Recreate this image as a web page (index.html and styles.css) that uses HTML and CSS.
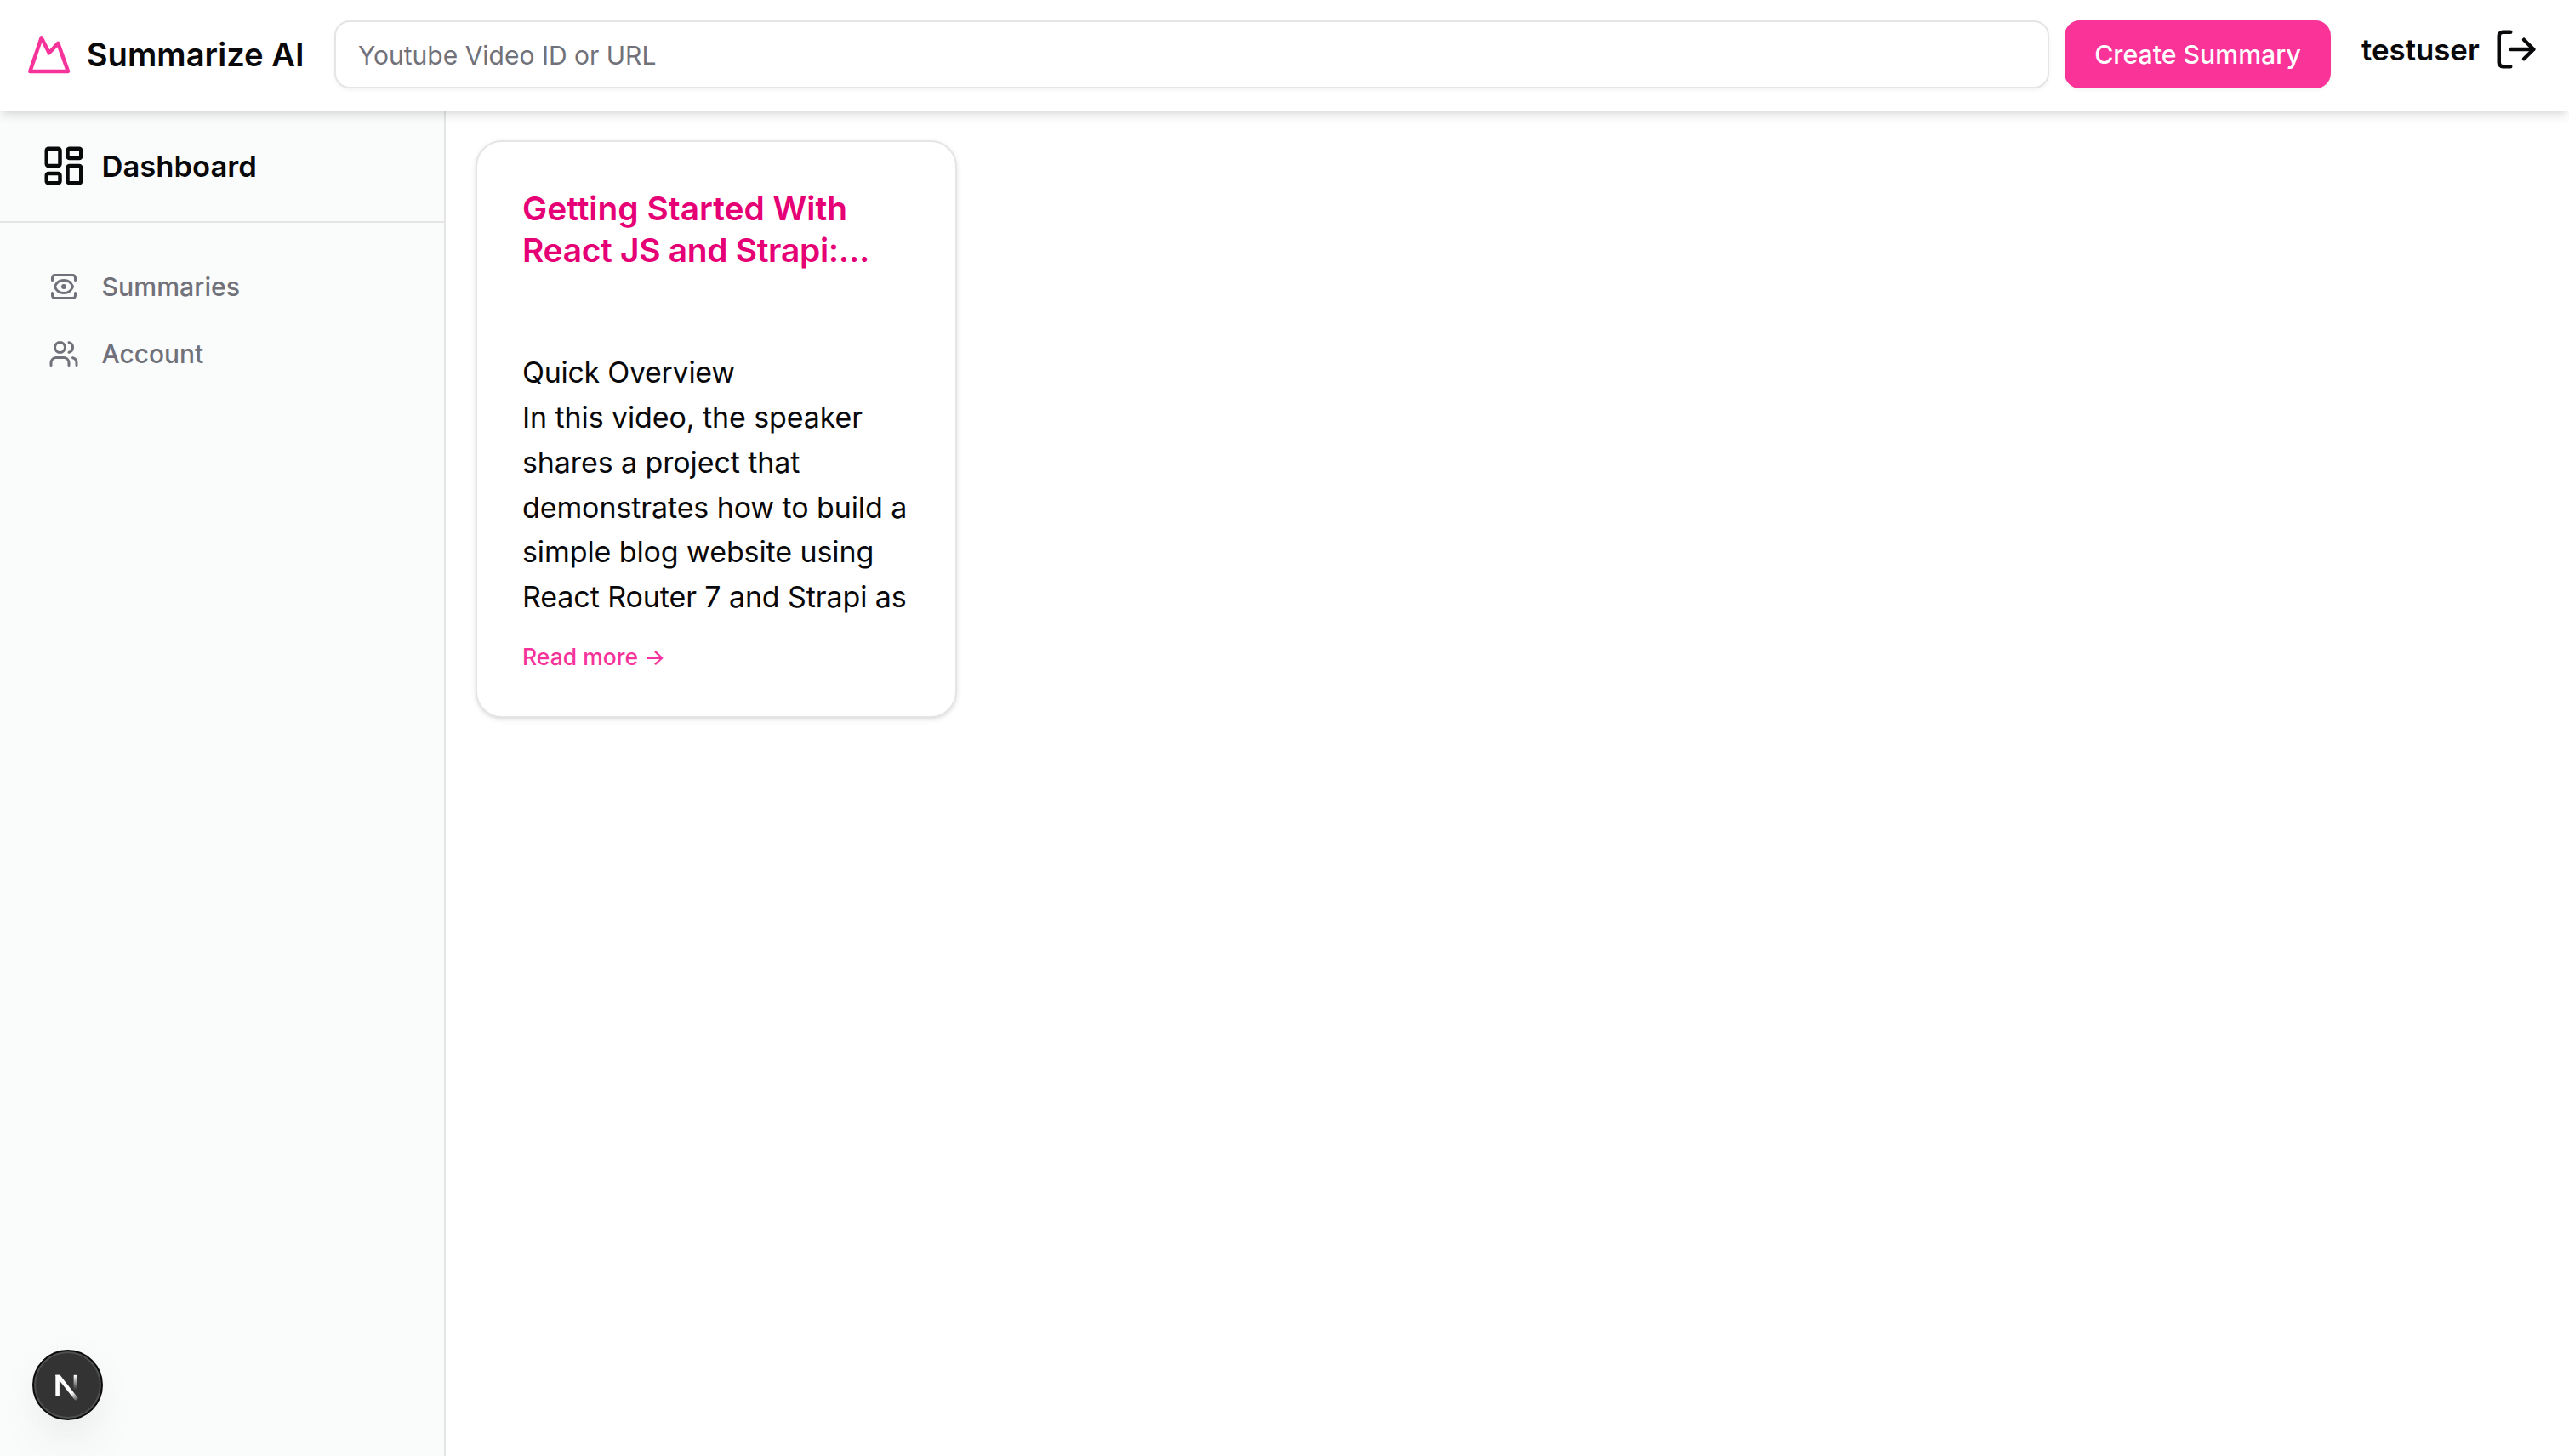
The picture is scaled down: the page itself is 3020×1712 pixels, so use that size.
FILE: index.html
```html
<!DOCTYPE html>
<html lang="en">
<head>
<meta charset="utf-8">
<title>Summarize AI</title>
<link rel="stylesheet" href="styles.css">
</head>
<body>
<header class="header">
  <a class="brand">
    <svg class="brand-icon" viewBox="0 0 54 54"><path d="M5.3 46 18.7 6.4 27.7 24.3 38.3 12.9 50 46Z"/></svg>
    <span>Summarize AI</span>
  </a>
  <form class="summary-form">
    <input class="field" type="text" placeholder="Youtube Video ID or URL">
    <button class="button" type="button">Create Summary</button>
  </form>
  <div class="user">
    <span>testuser</span>
    <svg class="icon icon-lg" viewBox="0 0 24 24"><path d="M9 21H5a2 2 0 0 1-2-2V5a2 2 0 0 1 2-2h4"/><path d="m16 17 5-5-5-5"/><path d="M21 12H9"/></svg>
  </div>
</header>
<div class="layout">
  <aside class="sidebar">
    <a class="sidebar-head">
      <svg class="icon icon-lg" viewBox="0 0 24 24"><rect width="7" height="9" x="3" y="3" rx="1"/><rect width="7" height="5" x="14" y="3" rx="1"/><rect width="7" height="9" x="14" y="12" rx="1"/><rect width="7" height="5" x="3" y="16" rx="1"/></svg>
      <span>Dashboard</span>
    </a>
    <nav class="nav">
      <a class="nav-item">
        <svg class="icon icon-sm" viewBox="0 0 24 24"><path d="M21 17v2a2 2 0 0 1-2 2H5a2 2 0 0 1-2-2v-2"/><path d="M21 7V5a2 2 0 0 0-2-2H5a2 2 0 0 0-2 2v2"/><circle cx="12" cy="12" r="1"/><path d="M18.944 12.33a1 1 0 0 0 0-.66 7.5 7.5 0 0 0-13.888 0 1 1 0 0 0 0 .66 7.5 7.5 0 0 0 13.888 0"/></svg>
        <span>Summaries</span>
      </a>
      <a class="nav-item nav-item-account">
        <svg class="icon icon-sm" viewBox="0 0 24 24"><path d="M16 21v-2a4 4 0 0 0-4-4H6a4 4 0 0 0-4 4v2"/><circle cx="9" cy="7" r="4"/><path d="M22 21v-2a4 4 0 0 0-3-3.87"/><path d="M16 3.13a4 4 0 0 1 0 7.75"/></svg>
        <span>Account</span>
      </a>
    </nav>
  </aside>
  <main class="main">
    <article class="card">
      <h2 class="card-title">Getting Started With<br><span class="tight">React JS and Strapi:...</span></h2>
      <div class="card-body">
        <p class="overview">Quick Overview</p>
        <p>In this video, the speaker<br>shares a project that<br>demonstrates how to build a<br>simple blog website using<br>React Router 7 and Strapi as</p>
      </div>
      <a class="read-more">Read more →</a>
    </article>
  </main>
</div>
<div class="dev-badge">
  <svg viewBox="0 0 83 83">
    <defs>
      <linearGradient id="diagonal" gradientUnits="userSpaceOnUse" x1="43" y1="46" x2="53" y2="59"><stop offset=".35" stop-color="#fff"/><stop offset="1" stop-color="#fff" stop-opacity="0.15"/></linearGradient>
      <linearGradient id="stem" gradientUnits="userSpaceOnUse" x1="0" y1="30" x2="0" y2="47"><stop offset="0" stop-color="#fff"/><stop offset="1" stop-color="#fff" stop-opacity="0"/></linearGradient>
    </defs>
    <path fill="#fff" d="M27.3 29.8h4.6v24.8h-4.6z"/>
    <path fill="url(#diagonal)" d="M27.3 29.8h5.2L54 57.2q-1.6 1.6-3.6 2.5L27.3 30.4z"/>
    <path fill="url(#stem)" d="M48.6 29.8h4.2V47h-4.2z"/>
  </svg>
</div>
</body>
</html>
```
FILE: styles.css
```css
* { box-sizing: border-box; margin: 0; }

body {
  height: 1712px;
  display: flex;
  flex-direction: column;
  overflow: hidden;
  background: #fff;
  color: #09090b;
  font-family: Inter, "Liberation Sans", sans-serif;
}

.header {
  position: relative;
  z-index: 1;
  flex: none;
  height: 130px;
  display: flex;
  align-items: center;
  padding: 0 35px 2px 30px;
  background: #fff;
  box-shadow: 0 8px 12px -2px rgba(0, 0, 0, .1), 0 4px 8px -4px rgba(0, 0, 0, .1);
}

.brand {
  flex: none;
  width: 363px;
  display: flex;
  align-items: center;
  gap: 17.7px;
  font-size: 38.2px;
  font-weight: 600;
  line-height: 54px;
}

.brand-icon {
  width: 54px;
  height: 54px;
  margin-top: 2px;
  fill: none;
  stroke: #f6339a;
  stroke-width: 4.5;
  stroke-linejoin: round;
}

.summary-form {
  flex: 1;
  display: flex;
  gap: 18px;
}

.field {
  flex: 1;
  height: 80px;
  padding: 2px 26px 0;
  border: 2px solid #e5e5e5;
  border-radius: 18px;
  background: #fff;
  font: 400 30px Inter, "Liberation Sans", sans-serif;
  box-shadow: 0 2px 4px rgba(0, 0, 0, .05);
}

.field::placeholder { color: #71717a; opacity: 1; }

.button {
  width: 313px;
  height: 80px;
  padding: 0;
  border: 0;
  border-radius: 18px;
  background: #f93398;
  color: #fff;
  font: 500 30.25px Inter, "Liberation Sans", sans-serif;
  box-shadow: 0 2px 4px rgba(0, 0, 0, .05);
}

.user {
  flex: none;
  width: 209px;
  height: 54px;
  margin: 0 0 13px 36px;
  display: flex;
  align-items: center;
  justify-content: space-between;
  font-size: 34.8px;
  font-weight: 600;
}

.icon {
  flex: none;
  fill: none;
  stroke: currentColor;
  stroke-width: 2;
  stroke-linecap: round;
  stroke-linejoin: round;
}

.icon-lg { width: 54px; height: 54px; }
.icon-sm { width: 36px; height: 36px; }

.layout {
  flex: 1;
  display: flex;
}

.sidebar {
  flex: none;
  width: 524px;
  border-right: 2px solid #e5e5e5;
  background: #fafcfb;
}

.sidebar-head {
  height: 132px;
  display: flex;
  align-items: center;
  gap: 17.5px;
  padding: 0 0 1px 48px;
  border-bottom: 2px solid #e5e5e5;
  font-size: 34.6px;
  font-weight: 600;
}

.nav {
  display: flex;
  flex-direction: column;
  padding: 35.5px 0 0 57px;
}

.nav-item {
  height: 79px;
  display: flex;
  align-items: center;
  gap: 26.5px;
  color: #71717a;
  font-size: 30.3px;
  font-weight: 500;
}

.nav-item-account { font-size: 29.9px; }

.main {
  flex: 1;
  display: grid;
  grid-template-columns: repeat(4, 1fr);
  gap: 54px;
  align-items: start;
  padding: 35px 36px 36px 35px;
}

.card {
  height: 679px;
  padding: 53px 0 0 53px;
  border: 2px solid #e5e5e5;
  border-radius: 31px;
  background: #fff;
  box-shadow: 0 2px 6px rgba(0, 0, 0, .1), 0 2px 4px -2px rgba(0, 0, 0, .1);
}

.card-title {
  color: #e60076;
  font-size: 38.9px;
  font-weight: 600;
  line-height: 49.4px;
}

.tight { letter-spacing: -.3px; }

.card-body {
  margin-top: 93.4px;
  font-size: 34px;
  line-height: 52.8px;
  letter-spacing: -.1px;
  white-space: nowrap;
}

.overview { letter-spacing: -.3px; }

.read-more {
  display: block;
  margin-top: 22.6px;
  color: #f6339a;
  font-size: 26.5px;
  font-weight: 500;
  line-height: 40px;
}

.dev-badge {
  position: fixed;
  z-index: 2;
  left: 38px;
  top: 1587px;
  width: 83px;
  height: 83px;
  border: 2px solid #0b0b0d;
  border-radius: 50%;
  background: #333;
  box-shadow: inset 0 0 0 2px #4f4f4f, 0 32px 64px -16px rgba(0, 0, 0, .12), 0 8px 50px rgba(0, 0, 0, .04);
}

.dev-badge svg {
  display: block;
  width: 83px;
  height: 83px;
  margin: -2px;
}
```
